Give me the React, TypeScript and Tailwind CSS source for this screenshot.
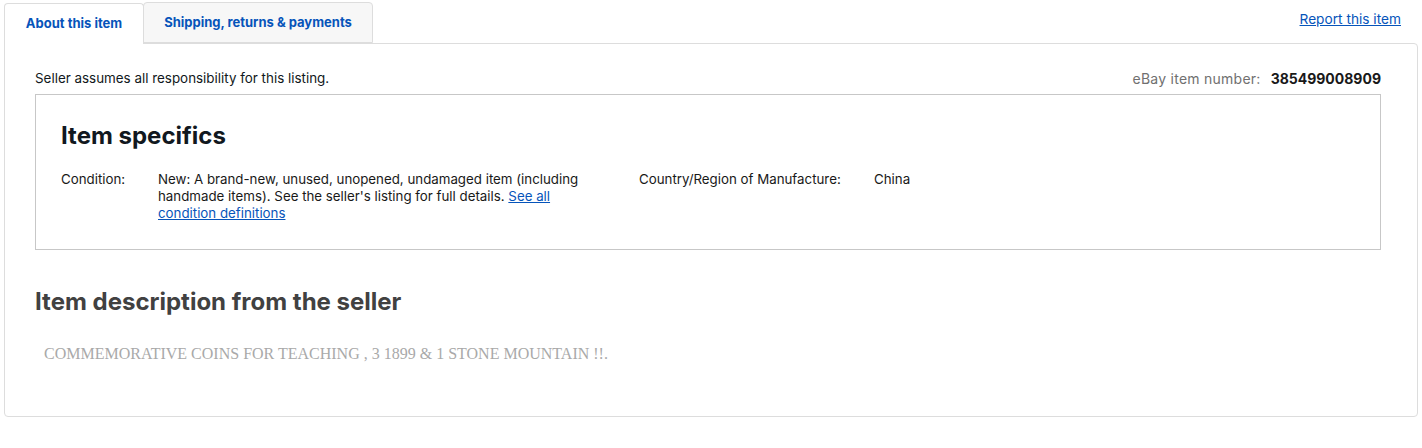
import React from "react";

export default function App() {
  const font = { fontFamily: "Inter, 'Noto Sans', Arial, sans-serif" };
  return (
    <div className="w-[1422px] h-[448px] bg-white" style={font}>
      <div className="pl-[4px] pr-[4px] pt-[2px]">
        <div className="flex items-end h-[41px] relative">
          <div className="w-[140px] h-[41px] border border-b-0 border-[#dddddd] rounded-t-[4px] bg-white flex items-center justify-center text-[13px] font-bold text-[#0654ba] relative z-10 -mb-px">
            About this item
          </div>
          <div className="w-[230px] h-[41px] border border-[#dddddd] rounded-t-[4px] bg-[#f7f7f7] flex items-center justify-center text-[13px] font-bold text-[#0654ba] -ml-px">
            Shipping, returns &amp; payments
          </div>
          <div className="flex-1" />
          <a className="text-[13.7px] text-[#0654ba] underline self-start mt-[7px] mr-[17px]" href="#">
            Report this item
          </a>
        </div>
        <div className="border border-[#dddddd] rounded-b-[4px] rounded-tr-[4px] h-[374px] pl-[30px] pr-[36px]">
          <div className="flex justify-between items-center h-[50px] pt-[19px] pb-[1px]">
            <span className="text-[13.4px] text-[#111820]">Seller assumes all responsibility for this listing.</span>
            <span className="text-[14px] text-[#707070] tracking-[0.25px]">
              eBay item number:<span className="ml-[10px] font-bold text-[#191919] tracking-[0px]">385499008909</span>
            </span>
          </div>
          <div className="border border-[#c7c7c7] h-[156px] px-[25px] pt-[26px]">
            <h2 className="text-[24px] font-bold text-[#111820] leading-[30px]">Item specifics</h2>
            <div className="flex mt-[20px] text-[13.3px] leading-[17px] text-[#191919]">
              <div className="w-[97px]">Condition:</div>
              <div className="w-[440px]">
                New: A brand-new, unused, unopened, undamaged item (including handmade items). See the seller's listing for full details.{" "}
                <a href="#" className="text-[#0654ba] underline">See all condition definitions</a>
              </div>
              <div className="w-[41px]" />
              <div className="w-[235px]">Country/Region of Manufacture:</div>
              <div>China</div>
            </div>
          </div>
          <h2 className="mt-[37px] text-[24px] font-bold text-[#414141] leading-[30px]">Item description from the seller</h2>
          <p
            className="mt-[25px] ml-[9px] text-[16px] text-[#a9a9a9]"
            style={{ fontFamily: "'Liberation Serif', 'Times New Roman', serif" }}
          >
            COMMEMORATIVE COINS FOR TEACHING , 3 1899 &amp; 1 STONE MOUNTAIN !!.
          </p>
        </div>
      </div>
    </div>
  );
}
